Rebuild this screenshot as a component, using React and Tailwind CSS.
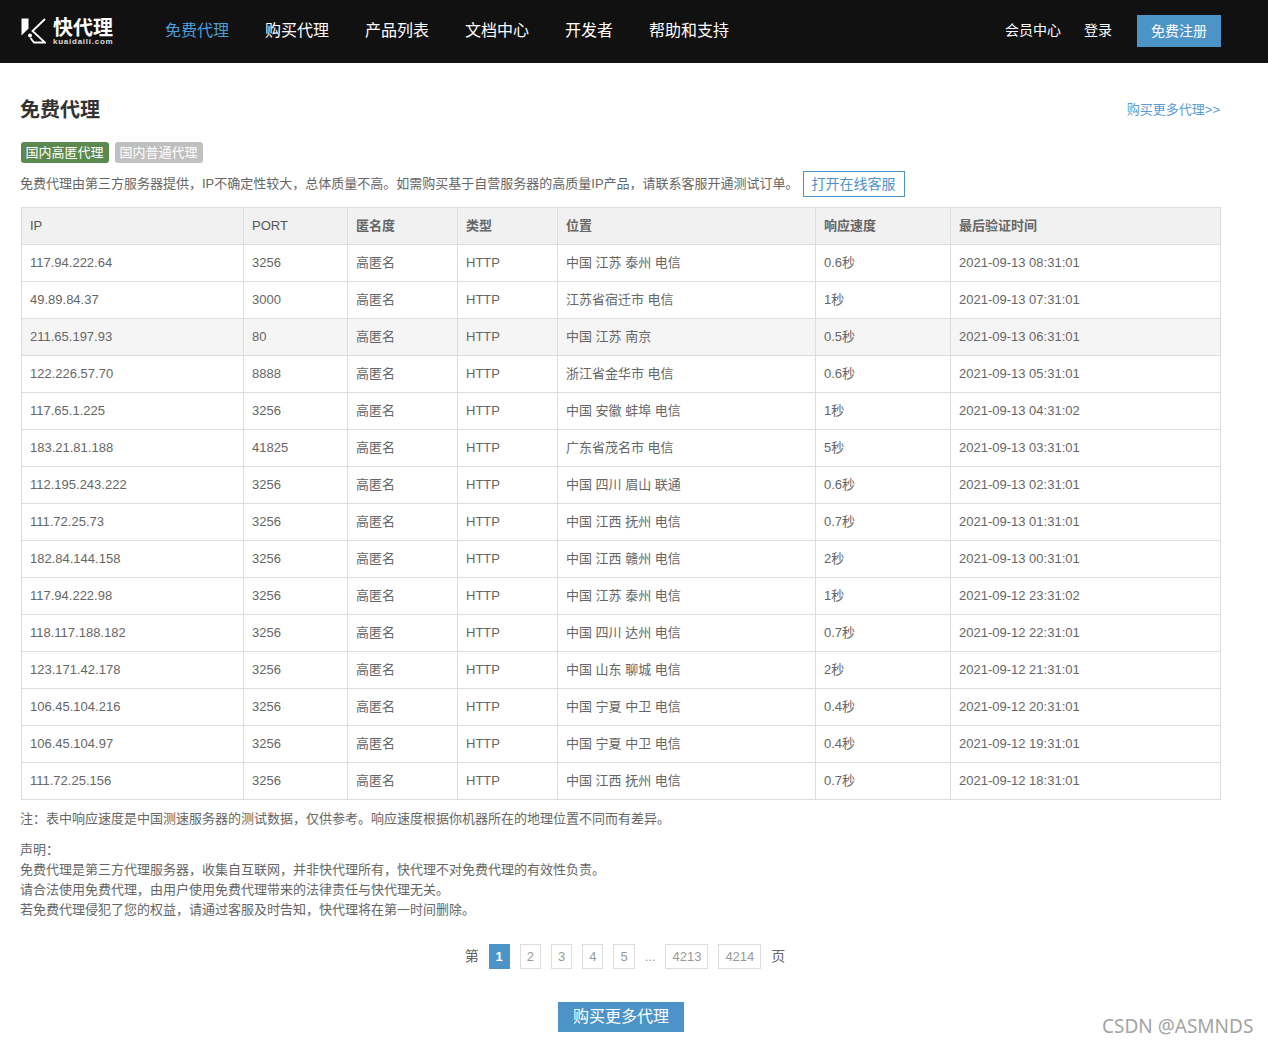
import React from 'react';

const FONT = "font-['Liberation_Sans','Noto_Sans_CJK_SC',sans-serif]";

const navItems = ['免费代理', '购买代理', '产品列表', '文档中心', '开发者', '帮助和支持'];
const headers = ['IP', 'PORT', '匿名度', '类型', '位置', '响应速度', '最后验证时间'];
const colWidths = ['w-[222px]', 'w-[104px]', 'w-[110px]', 'w-[100px]', 'w-[258px]', 'w-[135px]', 'w-[270px]'];

const rows = [
    ['117.94.222.64', '3256', '中国 江苏 泰州 电信', '0.6秒', '2021-09-13 08:31:01'],
    ['49.89.84.37', '3000', '江苏省宿迁市 电信', '1秒', '2021-09-13 07:31:01'],
    ['211.65.197.93', '80', '中国 江苏 南京', '0.5秒', '2021-09-13 06:31:01'],
    ['122.226.57.70', '8888', '浙江省金华市 电信', '0.6秒', '2021-09-13 05:31:01'],
    ['117.65.1.225', '3256', '中国 安徽 蚌埠 电信', '1秒', '2021-09-13 04:31:02'],
    ['183.21.81.188', '41825', '广东省茂名市 电信', '5秒', '2021-09-13 03:31:01'],
    ['112.195.243.222', '3256', '中国 四川 眉山 联通', '0.6秒', '2021-09-13 02:31:01'],
    ['111.72.25.73', '3256', '中国 江西 抚州 电信', '0.7秒', '2021-09-13 01:31:01'],
    ['182.84.144.158', '3256', '中国 江西 赣州 电信', '2秒', '2021-09-13 00:31:01'],
    ['117.94.222.98', '3256', '中国 江苏 泰州 电信', '1秒', '2021-09-12 23:31:02'],
    ['118.117.188.182', '3256', '中国 四川 达州 电信', '0.7秒', '2021-09-12 22:31:01'],
    ['123.171.42.178', '3256', '中国 山东 聊城 电信', '2秒', '2021-09-12 21:31:01'],
    ['106.45.104.216', '3256', '中国 宁夏 中卫 电信', '0.4秒', '2021-09-12 20:31:01'],
    ['106.45.104.97', '3256', '中国 宁夏 中卫 电信', '0.4秒', '2021-09-12 19:31:01'],
    ['111.72.25.156', '3256', '中国 江西 抚州 电信', '0.7秒', '2021-09-12 18:31:01'],
];

function Logo() {
    return (
        <div className="flex items-start gap-[7px] h-[27px]">
            <svg width="25" height="26" viewBox="0 0 25 26" className="shrink-0">
                <path d="M0.5 0.5H7.5V10.5L0.5 17.5Z" fill="#fff" />
                <path d="M24 1L11.5 13L24 24.5H13L9.5 20" fill="none" stroke="#fff" strokeWidth="1.8" />
                <circle cx="9" cy="17.5" r="2" fill="#fff" />
            </svg>
            <div className="flex flex-col w-[60px] pt-px">
                <span className="text-[20px] leading-[19px] font-bold text-white">快代理</span>
                <span className="text-[8px] leading-[8px] font-bold text-[#ddd] tracking-[0.75px] whitespace-nowrap">kuaidaili.com</span>
            </div>
        </div>
    );
}

function Header() {
    return (
        <header className="h-[63px] bg-[#111111] flex items-center w-[1200px] box-content pl-[21px] pr-[47px]">
            <Logo />
            <nav className="flex gap-[36px] ml-[52px] pb-[2px] text-[16px]">
                {navItems.map((item, i) => (
                    <span key={item} className={i === 0 ? 'text-[#4c9fdc]' : 'text-white'}>{item}</span>
                ))}
            </nav>
            <div className="ml-auto flex items-center pb-px text-[14px] text-white">
                <span className="pb-[2px]">会员中心</span>
                <span className="ml-[23px] pb-[2px]">登录</span>
                <span className="ml-[25px] w-[84px] h-[32px] bg-[#4c94c8] flex items-center justify-center">免费注册</span>
            </div>
        </header>
    );
}

function ProxyTable() {
    return (
        <table className="w-[1199px] table-fixed border-collapse text-[13px] text-[#666]">
            <thead>
                <tr className="h-[37px] bg-[#f1f1f1]">
                    {headers.map((h, i) => (
                        <th key={h} className={`${colWidths[i]} border border-[#ddd] pl-2 text-left ${i < 2 ? 'font-normal text-[#555]' : 'font-bold text-[#666]'}`}>{h}</th>
                    ))}
                </tr>
            </thead>
            <tbody>
                {rows.map((r, i) => (
                    <tr key={r[0]} className={i === 2 ? 'h-[37px] bg-[#f5f5f5]' : 'h-[37px]'}>
                        <td className="border border-[#ddd] pl-2">{r[0]}</td>
                        <td className="border border-[#ddd] pl-2">{r[1]}</td>
                        <td className="border border-[#ddd] pl-2">高匿名</td>
                        <td className="border border-[#ddd] pl-2">HTTP</td>
                        <td className="border border-[#ddd] pl-2">{r[2]}</td>
                        <td className="border border-[#ddd] pl-2">{r[3]}</td>
                        <td className="border border-[#ddd] pl-2">{r[4]}</td>
                    </tr>
                ))}
            </tbody>
        </table>
    );
}

function Pagination() {
    const box = 'h-[25px] flex items-center justify-center border border-[#ddd] text-[13px] text-[#999] px-[6px]';
    return (
        <div className="flex items-center justify-center h-[25px] gap-[10px] text-[14px] text-[#666] pl-[8px]">
            <span>第</span>
            <span className="h-[25px] w-[21px] flex items-center justify-center bg-[#4c94c8] text-[13px] text-white font-bold">1</span>
            {['2', '3', '4', '5'].map((n) => (
                <span key={n} className={box}>{n}</span>
            ))}
            <span className="text-[13px] text-[#999]">...</span>
            <span className={box}>4213</span>
            <span className={box}>4214</span>
            <span>页</span>
        </div>
    );
}

export default function App() {
    return (
        <div className={`${FONT} relative w-[1268px] h-[1045px] overflow-hidden bg-white`}>
            <Header />
            <main className="w-[1200px] ml-[21px]">
                <div className="flex items-center justify-between mt-[33px] h-[28px]">
                    <h1 className="-ml-px text-[20px] font-bold text-[#333]">免费代理</h1>
                    <a className="pr-px text-[13px] text-[#5b9bd5]">购买更多代理&gt;&gt;</a>
                </div>
                <div className="flex gap-[6px] mt-[18px]">
                    <span className="h-[21px] w-[88px] pr-px rounded-[3px] bg-[#5a8a4f] text-[13px] text-white flex items-center justify-center">国内高匿代理</span>
                    <span className="h-[21px] w-[88px] pr-px rounded-[3px] bg-[#c0c0c0] text-[13px] text-white flex items-center justify-center">国内普通代理</span>
                </div>
                <div className="flex items-center mt-[8px] h-[26px] text-[13px] text-[#666]">
                    <span className="-ml-px">免费代理由第三方服务器提供，IP不确定性较大，总体质量不高。如需购买基于自营服务器的高质量IP产品，请联系客服开通测试订单。</span>
                    <a className="ml-[4px] h-[26px] w-[102px] flex items-center justify-center border border-[#4c94c8] text-[14px] text-[#4c94c8]">打开在线客服</a>
                </div>
                <div className="mt-[10px]">
                    <ProxyTable />
                </div>
                <p className="mt-[9px] -ml-px text-[13px] leading-[20px] text-[#666]">注：表中响应速度是中国测速服务器的测试数据，仅供参考。响应速度根据你机器所在的地理位置不同而有差异。</p>
                <div className="mt-[11px] -ml-px text-[13px] leading-[20px] text-[#666]">
                    <p>声明：</p>
                    <p>免费代理是第三方代理服务器，收集自互联网，并非快代理所有，快代理不对免费代理的有效性负责。</p>
                    <p>请合法使用免费代理，由用户使用免费代理带来的法律责任与快代理无关。</p>
                    <p>若免费代理侵犯了您的权益，请通过客服及时告知，快代理将在第一时间删除。</p>
                </div>
                <div className="mt-[24px]">
                    <Pagination />
                </div>
                <div className="flex justify-center mt-[33px]">
                    <a className="h-[30px] w-[126px] bg-[#4c94c8] text-white text-[16px] flex items-center justify-center">购买更多代理</a>
                </div>
            </main>
            <span className="absolute left-[1102px] top-[1013px] font-['Noto_Sans',sans-serif] text-[19px] leading-[26px] text-[#a3a3a3] whitespace-nowrap">CSDN @ASMNDS</span>
        </div>
    );
}
